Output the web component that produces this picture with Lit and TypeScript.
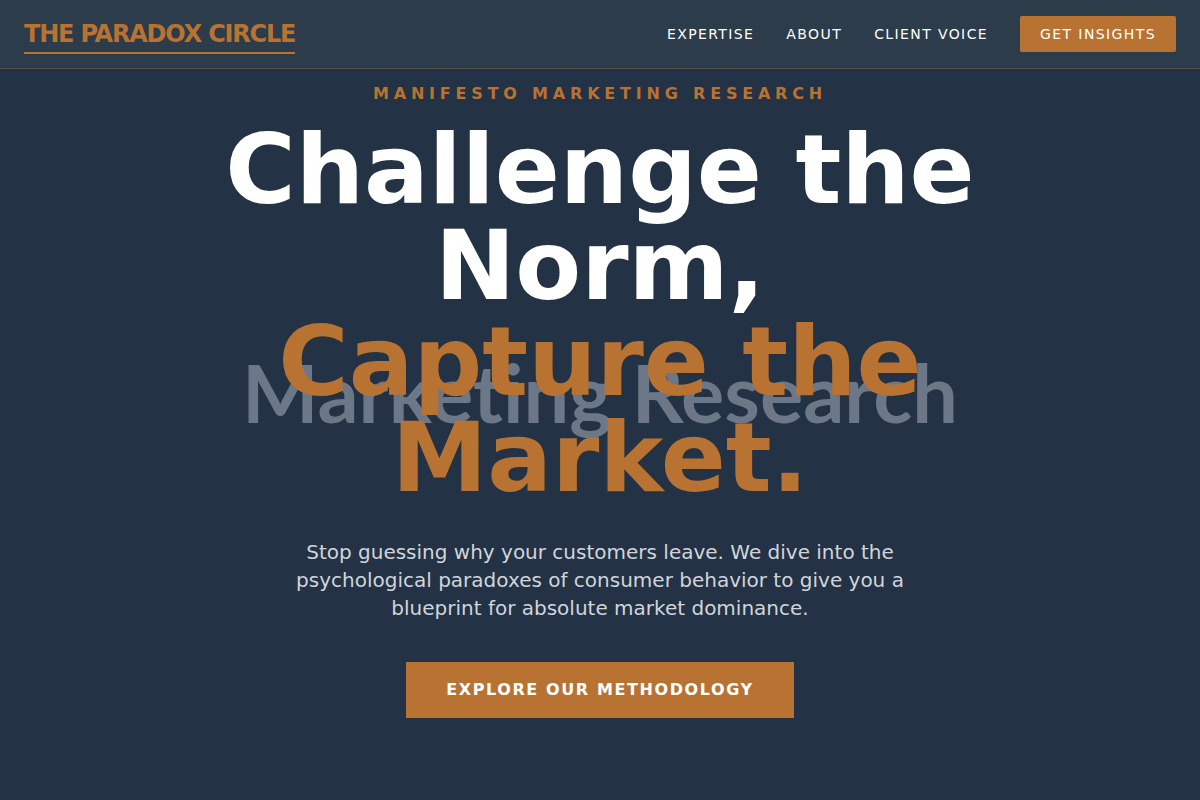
import { LitElement, html, css } from "lit";
import { customElement } from "lit/decorators.js";

@customElement("app-root")
export class AppRoot extends LitElement {
  static styles = css`
    :host {
      display: block;
      background: #233244;
      color: #fff;
      font-family: "DejaVu Sans", sans-serif;
    }
    * { box-sizing: border-box; }
    a { color: inherit; text-decoration: none; }
    .bar {
      position: fixed;
      top: 0;
      left: 0;
      right: 0;
      z-index: 1;
      display: flex;
      align-items: center;
      justify-content: space-between;
      padding: 16px 24px;
      background: #2c3c4b;
      border-bottom: 1px solid #56514d;
    }
    .logo {
      font-size: 24px;
      line-height: 32px;
      font-weight: 700;
      letter-spacing: -1.2px;
    }
    .brand {
      padding-bottom: 4px;
      border-bottom: 2px solid #b87333;
      color: #b87333;
    }
    .links {
      display: flex;
      align-items: center;
      gap: 32px;
      font-size: 14px;
      line-height: 20px;
      letter-spacing: 1.4px;
    }
    .pill {
      padding: 8px 20px;
      border-radius: 2px;
      background: #b87333;
    }
    .hero {
      position: relative;
      min-height: 100vh;
      display: flex;
      flex-direction: column;
      align-items: center;
      justify-content: center;
      text-align: center;
    }
    .backdrop {
      position: absolute;
      inset: 0;
      display: flex;
      align-items: center;
      justify-content: center;
      padding-bottom: 18px;
      overflow: hidden;
      color: #6c7887;
      font-family: Lato, sans-serif;
      font-weight: 700;
      font-size: 81px;
      font-variant-ligatures: none;
      white-space: nowrap;
    }
    .content {
      position: relative;
      display: flex;
      flex-direction: column;
      align-items: center;
      max-width: 896px;
    }
    .eyebrow {
      margin: 0 0 16px;
      color: #b87333;
      font-size: 16px;
      line-height: 24px;
      font-weight: 700;
      letter-spacing: 4.8px;
    }
    h1 {
      margin: 0 0 32px;
      font-size: 96px;
      line-height: 96px;
      font-weight: 700;
    }
    .accent { color: #b87333; }
    .lede {
      max-width: 672px;
      margin: 0 0 40px;
      color: #d1d5db;
      font-size: 20px;
      line-height: 28px;
    }
    .cta {
      padding: 16px 40px;
      background: #b87333;
      font-size: 16px;
      line-height: 24px;
      font-weight: 700;
      letter-spacing: 1.6px;
    }
  `;

  render() {
    return html`
      <header class="bar">
        <div class="logo"><a class="brand" href="#">THE PARADOX CIRCLE</a></div>
        <nav class="links">
          <a href="#expertise">EXPERTISE</a>
          <a href="#about">ABOUT</a>
          <a href="#voice">CLIENT VOICE</a>
          <a class="pill" href="#contact">GET INSIGHTS</a>
        </nav>
      </header>
      <main class="hero">
        <div class="backdrop" aria-hidden="true">Marketing Research</div>
        <div class="content">
          <p class="eyebrow">MANIFESTO MARKETING RESEARCH</p>
          <h1>Challenge the Norm,<br /><span class="accent">Capture the Market.</span></h1>
          <p class="lede">
            Stop guessing why your customers leave. We dive into the psychological
            paradoxes of consumer behavior to give you a blueprint for absolute market dominance.
          </p>
          <a class="cta" href="#expertise">EXPLORE OUR METHODOLOGY</a>
        </div>
      </main>
    `;
  }
}
